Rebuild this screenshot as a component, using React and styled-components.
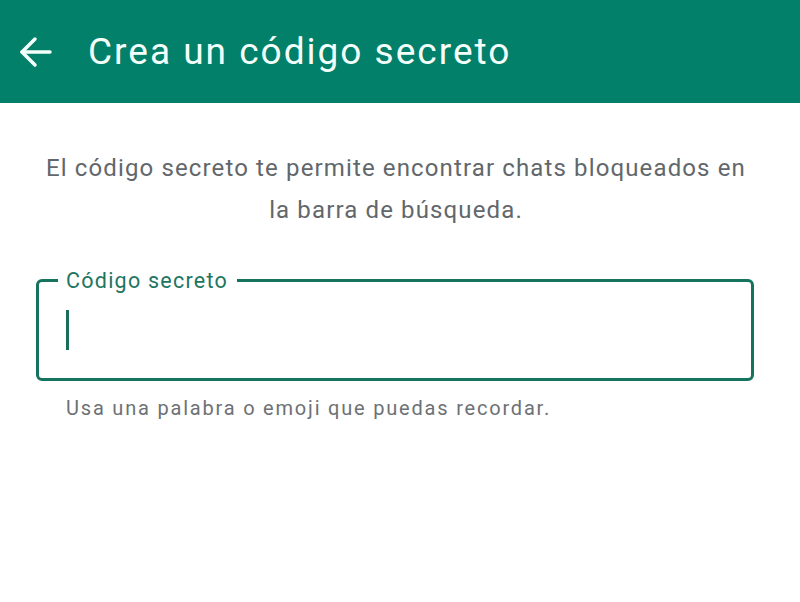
import styled, { createGlobalStyle } from 'styled-components'

const GlobalStyle = createGlobalStyle`
  html, body { margin: 0; padding: 0; background: #fff; }
  body { font-family: Roboto, "Noto Sans", sans-serif; }
`

const Screen = styled.div`
  width: 800px;
  height: 602px;
  background: #fff;
  display: flex;
  flex-direction: column;
`

const AppBar = styled.header`
  height: 103px;
  background: #02806a;
  display: flex;
  align-items: center;
  padding: 0 0 0 19px;
  box-sizing: border-box;
  color: #f4fffb;
`

const BackButton = styled.button`
  border: none;
  background: none;
  padding: 0;
  width: 34px;
  height: 32px;
  display: flex;
  align-items: center;
  color: inherit;
  margin-right: 35px;
`

const Title = styled.h1`
  margin: 0;
  font-weight: 400;
  font-size: 37px;
  letter-spacing: 2px;
  line-height: 1;
`

const Content = styled.main`
  display: flex;
  flex-direction: column;
  padding: 0 36px 0 36px;
`

const Intro = styled.p`
  margin: 44px 8px 0 0;
  text-align: center;
  color: #62676b;
  font-size: 24px;
  line-height: 42px;
  letter-spacing: 1.13px;
`

const Field = styled.fieldset`
  margin: 37px 10px 0 0;
  padding: 0 27px;
  height: 113px;
  box-sizing: border-box;
  border: 3px solid #16735e;
  border-radius: 6px;
`

const Legend = styled.legend`
  padding: 0 9px 0 8px;
  margin-left: -8px;
  color: #1d7562;
  font-size: 21.5px;
  letter-spacing: 1.25px;
`

const InputRow = styled.div`
  height: 74px;
  display: flex;
  align-items: center;
`

const Caret = styled.span`
  display: block;
  width: 3px;
  height: 40px;
  background: #1a6e5c;
`

const Helper = styled.p`
  margin: 15px 0 0 30px;
  color: #6d7175;
  font-size: 20px;
  letter-spacing: 1.8px;
`

const ArrowLeft = () => (
  <svg width="33" height="32" viewBox="0 0 33 32" fill="none" stroke="currentColor" strokeWidth="3.5" strokeLinecap="round" strokeLinejoin="round">
    <path d="M31 16H3" />
    <path d="M16 3L3 16l13 13" />
  </svg>
)

export default function App() {
  return (
    <>
      <GlobalStyle />
      <Screen>
        <AppBar>
          <BackButton aria-label="Atrás"><ArrowLeft /></BackButton>
          <Title>Crea un código secreto</Title>
        </AppBar>
        <Content>
          <Intro>
            El código secreto te permite encontrar chats bloqueados en<br />
            la barra de búsqueda.
          </Intro>
          <Field>
            <Legend>Código secreto</Legend>
            <InputRow>
              <Caret />
            </InputRow>
          </Field>
          <Helper>Usa una palabra o emoji que puedas recordar.</Helper>
        </Content>
      </Screen>
    </>
  )
}
